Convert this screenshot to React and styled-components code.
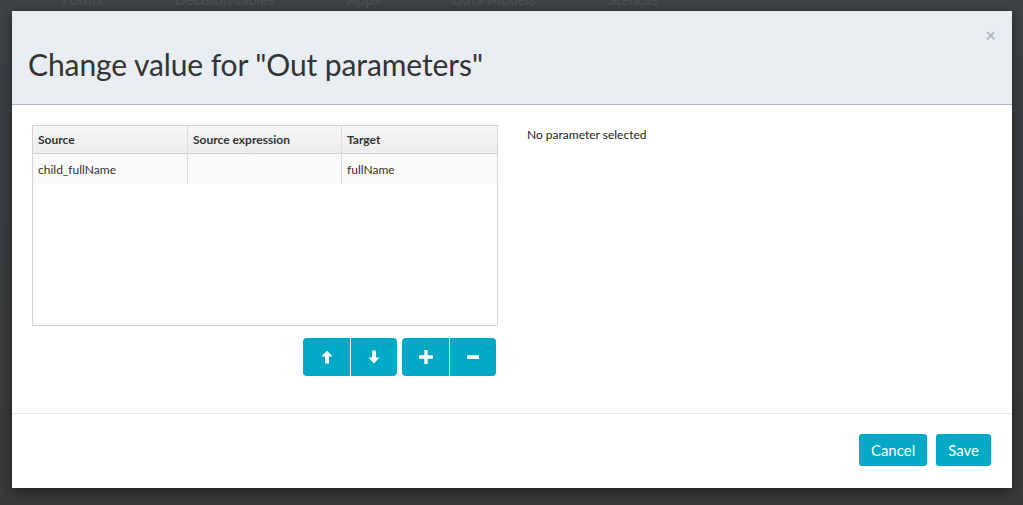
import React from 'react';
import styled, { createGlobalStyle } from 'styled-components';

const Global = createGlobalStyle`
  html, body { margin: 0; padding: 0; }
  body {
    width: 1023px;
    height: 505px;
    overflow: hidden;
    background: linear-gradient(#3d4346, #3a3a3a);
    font-family: Lato, "Open Sans", sans-serif;
  }
`;

const Page = styled.div`
  position: relative;
  width: 1023px;
  height: 505px;
`;

const NavBar = styled.div`
  display: flex;
  height: 11px;
  overflow: hidden;
  padding-left: 62px;
  gap: 72px;
`;

const NavItem = styled.span`
  font-size: 15px;
  line-height: 11px;
  margin-top: -6px;
  color: #4a5256;
  white-space: nowrap;
`;

const Modal = styled.div`
  margin-left: 12px;
  width: 1000px;
  height: 477px;
  background: #fff;
  box-shadow: 0 3px 12px rgba(0, 0, 0, 0.5);
  display: flex;
  flex-direction: column;
`;

const Header = styled.div`
  position: relative;
  height: 93px;
  background: #e8edf1;
  border-bottom: 1px solid #aab6c1;
  display: flex;
  align-items: center;
  padding: 0 16px;
`;

const Title = styled.h1`
  margin: 12px 0 0 0;
  font-weight: 400;
  font-size: 30px;
  color: #333;
  letter-spacing: -0.1px;
`;

const Close = styled.span`
  position: absolute;
  right: 16px;
  top: 13px;
  font-size: 18px;
  color: #b3b8bc;
  font-weight: 700;
`;

const Body = styled.div`
  flex: 1;
  display: flex;
  padding: 20px 20px 0 20px;
  border-bottom: 1px solid #e5e5e5;
`;

const LeftCol = styled.div`
  width: 466px;
  display: flex;
  flex-direction: column;
`;

const Grid = styled.div`
  height: 199px;
  border: 1px solid #d4d4d4;
  background: #fff;
`;

const Row = styled.div`
  display: grid;
  grid-template-columns: 154px 154px 1fr;
  height: ${p => (p.$head ? '27px' : '30px')};
  background: ${p => (p.$head ? 'linear-gradient(#f7f7f7, #ececec)' : '#fafafa')};
  border-bottom: ${p => (p.$head ? '1px solid #d4d4d4' : 'none')};
`;

const Cell = styled.div`
  display: flex;
  align-items: center;
  padding: 0 5px;
  font-size: 12px;
  font-weight: ${p => (p.$head ? 700 : 400)};
  color: #333;
  border-left: ${p => (p.$first ? 'none' : '1px solid #dcdcdc')};
`;

const Toolbar = styled.div`
  display: flex;
  justify-content: flex-end;
  gap: 5px;
  margin-top: 12px;
  padding-right: 2px;
`;

const Group = styled.div`
  display: flex;
  border-radius: 4px;
  overflow: hidden;
`;

const IconButton = styled.button`
  width: 47px;
  height: 38px;
  border: none;
  padding: 0;
  background: #00aac4;
  color: #fff;
  display: flex;
  align-items: center;
  justify-content: center;
  & + & { border-left: 1px solid #e8f6f9; }
`;

const RightCol = styled.div`
  flex: 1;
  padding-left: 29px;
  padding-top: 2px;
  font-size: 12px;
  color: #222;
`;

const Footer = styled.div`
  height: 72px;
  display: flex;
  align-items: center;
  justify-content: flex-end;
  gap: 9px;
  padding-right: 21px;
  padding-bottom: 2px;
`;

const Btn = styled.button`
  height: 32px;
  padding: 0 ${p => p.$px}px;
  border: none;
  border-radius: 3px;
  background: #00aac4;
  color: #fff;
  font-family: Lato, sans-serif;
  font-size: 15px;
`;

const Up = () => (
  <svg width="12" height="14" viewBox="0 0 12 14">
    <path d="M6 0.5 L11.5 6.5 H8 V13.5 H4 V6.5 H0.5 Z" fill="#fff" />
  </svg>
);
const Down = () => (
  <svg width="12" height="14" viewBox="0 0 12 14">
    <path d="M6 13.5 L11.5 7.5 H8 V0.5 H4 V7.5 H0.5 Z" fill="#fff" />
  </svg>
);
const Plus = () => (
  <svg width="14" height="14" viewBox="0 0 14 14">
    <path d="M5.3 0 H8.7 V5.3 H14 V8.7 H8.7 V14 H5.3 V8.7 H0 V5.3 H5.3 Z" fill="#fff" />
  </svg>
);
const Minus = () => (
  <svg width="14" height="14" viewBox="0 0 14 14">
    <rect x="1" y="5.3" width="12" height="3.6" fill="#fff" />
  </svg>
);

export default function App() {
  return (
    <Page>
      <Global />
      <NavBar>
        <NavItem>Forms</NavItem>
        <NavItem>Decision tables</NavItem>
        <NavItem>Apps</NavItem>
        <NavItem>Data Models</NavItem>
        <NavItem>Stencils</NavItem>
      </NavBar>
      <Modal>
        <Header>
          <Title>Change value for "Out parameters"</Title>
          <Close>×</Close>
        </Header>
        <Body>
          <LeftCol>
            <Grid>
              <Row $head>
                <Cell $head $first>Source</Cell>
                <Cell $head>Source expression</Cell>
                <Cell $head>Target</Cell>
              </Row>
              <Row>
                <Cell $first>child_fullName</Cell>
                <Cell></Cell>
                <Cell>fullName</Cell>
              </Row>
            </Grid>
            <Toolbar>
              <Group>
                <IconButton><Up /></IconButton>
                <IconButton><Down /></IconButton>
              </Group>
              <Group>
                <IconButton><Plus /></IconButton>
                <IconButton><Minus /></IconButton>
              </Group>
            </Toolbar>
          </LeftCol>
          <RightCol>No parameter selected</RightCol>
        </Body>
        <Footer>
          <Btn $px={12}>Cancel</Btn>
          <Btn $px={12}>Save</Btn>
        </Footer>
      </Modal>
    </Page>
  );
}
